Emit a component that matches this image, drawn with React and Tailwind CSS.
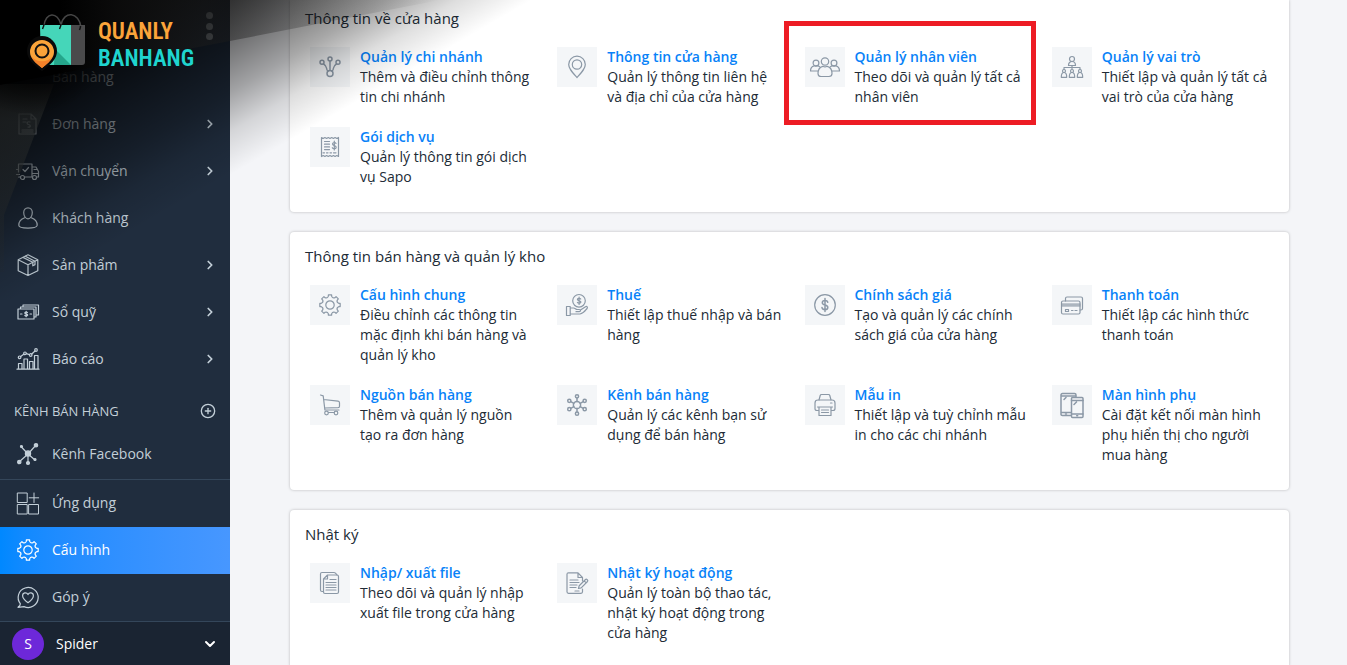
import { ChevronDown, ChevronRight, CirclePlus } from "lucide-react";

// Outline of an eight-tooth gear centred in a 22x22 box
const gearPath = (() => {
  const at = (deg, r) => {
    const a = (deg * Math.PI) / 180;
    return `${(11 + r * Math.cos(a)).toFixed(2)} ${(11 + r * Math.sin(a)).toFixed(2)}`;
  };
  let d = "";
  for (let i = 0; i < 8; i++) {
    const c = i * 45 - 90;
    d += `${i === 0 ? "M" : "L"}${at(c - 9, 10.3)}`;
    d += `L${at(c + 9, 10.3)}L${at(c + 11, 8.8)}Q${at(c + 22.5, 6.9)} ${at(c + 34, 8.8)}`;
  }
  return d + "Z";
})();

const Svg = ({ children }) => (
  <svg
    width="22"
    height="22"
    viewBox="0 0 22 22"
    fill="none"
    stroke="currentColor"
    strokeWidth="1.2"
    strokeLinecap="round"
    strokeLinejoin="round"
    aria-hidden="true"
    className="shrink-0 overflow-visible"
  >
    {children}
  </svg>
);

const icons = {
  order: (
    <>
      <path d="M2 1h12l5 5v15H2zM14 1v5h5M5 17h11M5 19h11" />
      <path d="M6 6h4M6 9h3M13 9c-3-1-4 2-1.500 2.500S14 14.500 11 14" />
    </>
  ),
  truck: (
    <>
      <path d="M1.500 12V4H15v13H8M15 7h4l2.500 4.500V17h-1.500M-.5 14.500h3M-.5 9.500h2M1.500 17h2M17 9.500h3M15 13.500h6.500" />
      <path d="M6 9.500l2 2 3.500-4" />
      <circle cx="5.500" cy="17.500" r="2" />
      <circle cx="17.500" cy="17.500" r="2" />
    </>
  ),
  user: (
    <>
      <path d="M11 .8c2.600 0 4.300 1.900 4.300 4.800 0 3.400-2 6.200-4.300 6.200S6.700 9 6.700 5.600C6.700 2.700 8.400.8 11 .8z" />
      <path d="M7.700 10.800C4.200 12 1.800 13.600 1.800 18.300c0 1.800 4.600 2.800 9.200 2.800s9.200-1 9.200-2.800c0-4.700-2.400-6.300-5.900-7.500" />
    </>
  ),
  box: (
    <>
      <path d="M11 .8l9.800 5v11L11 21.500 1.200 16.800v-11zM1.200 5.800L11 10.700l9.800-4.900M11 10.700v10.800" />
      <path d="M6 3.400l9.800 4.900v3.500l2.200-1.200V7.200L8.300 2.200" />
    </>
  ),
  cash: (
    <>
      <path d="M1 8h16v10H1zM3.500 7.500V6h15.500v10h-1.500M6 5.500V4h15.500v10H20" />
      <path d="M10.500 11.500c-.6-.8-2.700-.6-2.700.6 0 1.300 2.900.6 2.900 1.900 0 1.200-2.300 1.300-2.900.4M9.200 10.300v5.400M3.500 13h1.500M13 13h1.500" />
    </>
  ),
  chart: (
    <>
      <path d="M0 21.200h22M1.500 21v-5.500H5V21M7 21V11h3.500v10M12.500 21v-7.500H16V21M17.500 21V7.500H21V21" />
      <path d="M3.700 8.600l3-2.300M9.400 5.600l3 1M14.800 6l3.200-3" />
      <circle cx="2.600" cy="9.300" r="1.300" />
      <circle cx="8" cy="5.300" r="1.300" />
      <circle cx="13.700" cy="7" r="1.300" />
      <circle cx="19" cy="2" r="1.300" />
    </>
  ),
  network: (
    <>
      <path d="M11 11L4 3.500M11 11l8-9M11 11l-9 8M11 11v9M11 11l7 6" />
      <g fill="currentColor">
        <circle cx="11" cy="10.500" r="2.600" />
        <circle cx="4.500" cy="3.500" r="1" />
        <circle cx="19" cy="2.200" r="1.700" />
        <circle cx="2.300" cy="19" r="1.700" />
        <circle cx="11" cy="20" r="1.500" />
        <circle cx="18" cy="16.500" r="1" />
      </g>
    </>
  ),
  apps: <path d="M.7 1h9.500v9.500H.7zM.7 12.500h9.500V22H.7zM12 12.500h9.500V22H12zM17 1v9.500M12.200 5.800h9.500" strokeWidth="1" />,
  gear: (
    <>
      <path d={gearPath} />
      <circle cx="11" cy="11" r="4.200" />
    </>
  ),
  feedback: (
    <>
      <path d="M3.400 17.800A10 10 0 1 1 7 20.600L1 21.300c1.500-1 2.400-2 2.400-3.500z" />
      <path d="M11 16.700C7.300 14 5.600 12 5.600 9.700c0-3.200 4-4 5.400-1.100 1.400-2.900 5.400-2.100 5.400 1.100 0 2.300-1.700 4.300-5.400 7z" />
    </>
  ),
  branch: (
    <g strokeWidth="1.5">
      <circle cx="11" cy="3" r="2" />
      <circle cx="3" cy="6.300" r="2" />
      <circle cx="19" cy="6.300" r="2" />
      <circle cx="11" cy="17.500" r="3" />
      <path d="M11 5v9.500M4.500 7.800c1.500 1 2.700 2.200 3 4.200.2 1.600.6 2.500 1.500 3.300M17.500 7.800c-1.500 1-2.700 2.200-3 4.200-.2 1.600-.6 2.500-1.500 3.300" />
    </g>
  ),
  pin: (
    <>
      <path d="M11 21.500C6 16 2.700 12.600 2.700 8.500a8.300 8.300 0 0 1 16.600 0c0 4.100-3.300 7.500-8.300 13z" />
      <circle cx="11" cy="8.500" r="4.700" />
    </>
  ),
  staff: (
    <>
      <circle cx="11" cy="5.500" r="3.700" />
      <path d="M4 17.500c0-4.500 2-6.500 4.800-7.200 1.500.8 2.900.8 4.400 0 2.800.7 4.800 2.700 4.800 7.200 0 2.500-1.500 3-3 3H7c-1.500 0-3-.5-3-3z" />
      <circle cx="2" cy="7" r="2.900" />
      <circle cx="20" cy="7" r="2.900" />
      <path d="M3.500 15h-7c0-3 1.500-4.700 3.600-5.200 1.300.6 2.400.6 3.700 0 .8.200 1.400.5 1.900 1M18.500 15h7c0-3-1.500-4.700-3.600-5.200-1.300.6-2.400.6-3.700 0-.8.200-1.400.5-1.900 1" />
    </>
  ),
  roles: (
    <>
      <circle cx="11" cy="3" r="2.500" />
      <path d="M7.500 9.500c0-2.500 1.500-4 3.500-4s3.500 1.500 3.500 4zM11 9.500V13M3 13.500v-2h16v2" />
      <circle cx="3" cy="15" r="1.500" />
      <circle cx="11" cy="15" r="1.500" />
      <circle cx="19" cy="15" r="1.500" />
      <path d="M.3 21.300c0-3 .7-4.800 2.700-4.800s2.700 1.800 2.700 4.800zM8.300 21.300c0-3 .7-4.800 2.700-4.800s2.700 1.800 2.700 4.800zM16.300 21.300c0-3 .7-4.800 2.700-4.800s2.700 1.800 2.700 4.800z" />
    </>
  ),
  receipt: (
    <>
      <path d="M2.500 1.500l1.700 1 1.700-1 1.700 1 1.700-1 1.700 1 1.700-1 1.700 1 1.700-1 1.700 1 1.700-1v19l-1.700-1-1.700 1-1.700-1-1.700 1-1.700-1-1.700 1-1.700-1-1.700 1-1.700-1-1.700 1z" />
      <path d="M5.500 5.500h5M5.500 8.200h5M5.500 10.900h5M5.500 13.600h5M4 16.800h1.500M7.500 16.800H9M11 16.800h1.500M14.500 16.800H17" />
      <path d="M17 7.500c-.6-1.500-3.500-1.300-3.500.5 0 2 3.700 1.300 3.700 3.300 0 1.900-3.200 2-3.900.4M15.300 5v9" />
    </>
  ),
  tax: (
    <>
      <circle cx="13" cy="6.800" r="6.300" />
      <path d="M14.700 5c-.6-1-3.300-.9-3.300.5 0 1.600 3.500 1 3.500 2.600 0 1.400-2.800 1.500-3.500.4M13.100 3v7.500" />
      <path d="M.5 12.500h3.700v9H.5zM4.200 14h3.300c1.800 0 2 1.500 3.800 1.500h2c1.600 0 1.600 2.200 0 2.200H10M14.500 16l5-3.300c1.500-.7 2.500.6 1.500 1.800-2 2.500-3.500 5-7 5.500H4.200" />
    </>
  ),
  price: (
    <>
      <circle cx="11" cy="11" r="10.300" />
      <path
        d="M13.800 8.300c-.3-1.200-1.300-1.800-2.800-1.800s-2.700.8-2.700 2.200c0 3.200 5.500 1.500 5.500 4.700 0 1.400-1.200 2.200-2.800 2.200s-2.700-.7-3-2M11 4.500v13"
        strokeWidth="1.5"
      />
    </>
  ),
  card: (
    <>
      <path d="M4.500 7V4.500c0-1 .5-1.500 1.500-1.500h14c1 0 1.500.5 1.500 1.500v10c0 1-.5 1.500-1.500 1.500h-1" />
      <rect x=".5" y="7" width="18.500" height="13" rx="1.500" />
      <path d="M.5 10h18.500M.5 12h18.500M10.500 16.500h1.500M14 16.500h2M4.500 15.500h3v2h-3z" />
      <path d="M1 11h18" strokeWidth="1.5" opacity=".5" />
    </>
  ),
  cart: (
    <>
      <path d="M1.500 1l2.700.8 1.700 14.200H20M4.600 5.500l14.400 1.700c1 .1 1.500.6 1.500 1.500v3.500c0 1-.5 1.400-1.500 1.500L5.600 14" />
      <circle cx="7.500" cy="19" r="1.800" />
      <circle cx="17" cy="19" r="1.800" />
      <path d="M9.500 18.500h5.500" />
    </>
  ),
  channels: (
    <g strokeWidth="1.5">
      <circle cx="11" cy="11" r="3.600" />
      <circle cx="11" cy="2.300" r="1.600" />
      <circle cx="11" cy="19.700" r="1.600" />
      <circle cx="3.300" cy="6.800" r="1.600" />
      <circle cx="18.700" cy="6.800" r="1.600" />
      <circle cx="3.300" cy="15.200" r="1.600" />
      <circle cx="18.700" cy="15.200" r="1.600" />
      <path d="M11 4v3.400M11 14.600V18M4.800 7.600l3 1.700M17.200 7.600l-3 1.700M4.800 14.400l3-1.700M17.200 14.400l-3-1.700" />
    </g>
  ),
  printer: (
    <>
      <path d="M5 6l1.200-4.500c.2-.7.500-1 1.300-1h7c.8 0 1.100.3 1.300 1L17 6" />
      <path d="M4.500 16.500H3c-1.400 0-2-.6-2-2V9c0-2 1-3 3-3h14c2 0 3 1 3 3v5.500c0 1.400-.6 2-2 2h-1.500M16.500 9h1.500" />
      <path d="M3.500 13h15M5 13v8.500h12V13M7.500 16h7M7.500 18.500h7" />
    </>
  ),
  screens: (
    <g strokeWidth="1.5">
      <path d="M9.500 21.500H1.500c-.8 0-1.500-.4-1.500-1V1C0 .3.500-.5 1.500-.5h12c1 0 1.500.5 1.500 1.500v2M0 2h15M0 18.500h9.500M3 5.500l2-2" />
      <rect x="10.500" y="3.500" width="11.500" height="20" rx="1" />
      <path d="M10.500 6.500H22M10.500 20H22M15.700 21.800h1M13 10.500l2.500-2.500M4.500 20h1" />
    </g>
  ),
  files: (
    <>
      <path d="M4.500 19.500H3c-1 0-1.500-.5-1.500-1.500V2C1.500 1 2 .5 3 .5h12c.6 0 1 .2 1.500.6L18 3" />
      <path d="M8.500 3H18c1 0 1.500.5 1.500 1.500v15.500c0 1-.5 1.500-1.500 1.500H6c-1 0-1.500-.5-1.500-1.500V7zM8.500 3v4h-4M7 10.500h10M7 13h10M7 15.500h10M7 18h10M11 7.500h6" />
    </>
  ),
  log: (
    <>
      <path d="M16.500 9V5.500L12 .8H2.500c-1 0-1.500.5-1.500 1.500v17.500c0 1 .5 1.500 1.500 1.500H15c1 0 1.500-.5 1.500-1.500V17M12 .8v4.700h4.500M4 8h8M4 10.500h9M4 13h7M4 15.500h6M9 19h4" />
      <path d="M12.500 16.500l.7-2.800 6.300-6.200c1-1 3 .9 2 2l-6.300 6.300zM18.200 8.800l2 2" />
    </>
  ),
};

const menu = [
  { label: "Bán hàng" },
  { label: "Đơn hàng", icon: "order", more: true },
  { label: "Vận chuyển", icon: "truck", more: true },
  { label: "Khách hàng", icon: "user" },
  { label: "Sản phẩm", icon: "box", more: true },
  { label: "Sổ quỹ", icon: "cash", more: true },
  { label: "Báo cáo", icon: "chart", more: true },
];

const sections = [
  {
    title: "Thông tin về cửa hàng",
    items: [
      { icon: "branch", title: "Quản lý chi nhánh", text: "Thêm và điều chỉnh thông tin chi nhánh" },
      { icon: "pin", title: "Thông tin cửa hàng", text: "Quản lý thông tin liên hệ và địa chỉ của cửa hàng" },
      { icon: "staff", title: "Quản lý nhân viên", text: "Theo dõi và quản lý tất cả nhân viên", marked: true },
      { icon: "roles", title: "Quản lý vai trò", text: "Thiết lập và quản lý tất cả vai trò của cửa hàng" },
      { icon: "receipt", title: "Gói dịch vụ", text: "Quản lý thông tin gói dịch vụ Sapo" },
    ],
  },
  {
    title: "Thông tin bán hàng và quản lý kho",
    items: [
      { icon: "gear", title: "Cấu hình chung", text: "Điều chỉnh các thông tin mặc định khi bán hàng và quản lý kho" },
      { icon: "tax", title: "Thuế", text: "Thiết lập thuế nhập và bán hàng" },
      { icon: "price", title: "Chính sách giá", text: "Tạo và quản lý các chính sách giá của cửa hàng" },
      { icon: "card", title: "Thanh toán", text: "Thiết lập các hình thức thanh toán" },
      { icon: "cart", title: "Nguồn bán hàng", text: "Thêm và quản lý nguồn tạo ra đơn hàng" },
      { icon: "channels", title: "Kênh bán hàng", text: "Quản lý các kênh bạn sử dụng để bán hàng" },
      { icon: "printer", title: "Mẫu in", text: "Thiết lập và tuỳ chỉnh mẫu in cho các chi nhánh" },
      { icon: "screens", title: "Màn hình phụ", text: "Cài đặt kết nối màn hình phụ hiển thị cho người mua hàng" },
    ],
  },
  {
    title: "Nhật ký",
    items: [
      { icon: "files", title: "Nhập/ xuất file", text: "Theo dõi và quản lý nhập xuất file trong cửa hàng" },
      { icon: "log", title: "Nhật ký hoạt động", text: "Quản lý toàn bộ thao tác, nhật ký hoạt động trong cửa hàng" },
    ],
  },
];

function MenuItem({ label, icon, more, active }) {
  return (
    <a
      href="#"
      className={
        active
          ? "flex h-[47px] items-center gap-[13px] bg-linear-to-r from-[#0088ff] to-[#4797ff] px-[17px] pb-0.5 text-sm text-white"
          : "flex h-[47px] items-center gap-[13px] px-[17px] pb-0.5 text-sm text-[#c3cfd8]"
      }
    >
      {icon ? <Svg>{icons[icon]}</Svg> : <span className="w-[22px]" />}
      <span className="grow">{label}</span>
      {more && <ChevronRight size={14} strokeWidth={3} className="-mr-1" />}
    </a>
  );
}

function Sidebar() {
  return (
    <aside className="flex w-[230px] shrink-0 flex-col bg-[#202d3e]">
      <div className="flex h-[54px] shrink-0 justify-end px-[17px] pt-3">
        <button type="button" aria-label="Menu" className="flex h-7 w-2 flex-col items-center justify-between text-[#c3cfd8]">
          <span className="size-[7px] rounded-full bg-current" />
          <span className="size-[7px] rounded-full bg-current" />
          <span className="size-[7px] rounded-full bg-current" />
        </button>
      </div>
      <nav className="flex grow flex-col">
        {menu.map((item) => (
          <MenuItem key={item.label} {...item} />
        ))}
        <div className="flex h-12 items-end justify-between px-[14px] pb-2 text-[13px] text-[#c3cfd8]">
          <span className="leading-6">KÊNH BÁN HÀNG</span>
          <button type="button" aria-label="Thêm kênh" className="flex h-6 items-center">
            <CirclePlus size={16} />
          </button>
        </div>
        <MenuItem label="Kênh Facebook" icon="network" />
        <div className="mt-px border-t border-[#34465a]">
          <MenuItem label="Ứng dụng" icon="apps" />
          <MenuItem label="Cấu hình" icon="gear" active />
          <MenuItem label="Góp ý" icon="feedback" />
        </div>
      </nav>
      <button
        type="button"
        className="flex h-[45px] shrink-0 items-center gap-3 border-t border-[#34465a] bg-[#1a2432] px-3 text-left text-sm text-white"
      >
        <span className="flex size-8 items-center justify-center rounded-full bg-[#6d28d9]">S</span>
        <span className="grow">Spider</span>
        <ChevronDown size={16} strokeWidth={3} />
      </button>
    </aside>
  );
}

function SettingItem({ icon, title, text, marked }) {
  return (
    <div className="relative flex items-start gap-[10px] pr-[22px]">
      <span className="flex size-10 shrink-0 items-center justify-center bg-[#f4f6f8] text-[#8b98a6]">
        <Svg>{icons[icon]}</Svg>
      </span>
      <div className="text-sm leading-5">
        <a href="#" className="block font-semibold text-[#0882f8]">
          {title}
        </a>
        <p>{text}</p>
      </div>
      {marked && (
        <div className="pointer-events-none absolute -left-[21px] -top-[26px] h-[104px] w-[252px] border-[5px] border-[#ed1c24]" />
      )}
    </div>
  );
}

// Dark translucent shards with the brand mark in the top left corner
function Watermark() {
  return (
    <div className="pointer-events-none absolute left-0 top-0">
      <svg width="560" height="300" viewBox="0 0 560 300" aria-hidden="true">
        <defs>
          <linearGradient id="fade" gradientUnits="userSpaceOnUse" x1="0" y1="0" x2="134" y2="231">
            <stop offset="0" stopOpacity="1" />
            <stop offset=".3" stopOpacity=".9" />
            <stop offset=".44" stopOpacity=".72" />
            <stop offset=".56" stopOpacity=".56" />
            <stop offset=".73" stopOpacity=".34" />
            <stop offset=".86" stopOpacity=".13" />
            <stop offset="1" stopOpacity="0" />
          </linearGradient>
          <linearGradient id="band" gradientUnits="userSpaceOnUse" x1="60" y1="0" x2="440" y2="0">
            <stop offset="0" stopColor="#000" stopOpacity="1" />
            <stop offset=".15" stopColor="#0c0c0c" stopOpacity=".85" />
            <stop offset=".38" stopColor="#1c1c1c" stopOpacity=".5" />
            <stop offset=".6" stopColor="#1c1c1c" stopOpacity=".28" />
            <stop offset="1" stopColor="#1c1c1c" stopOpacity="0" />
          </linearGradient>
          <linearGradient id="wedge" gradientUnits="userSpaceOnUse" x1="0" y1="84" x2="0" y2="275">
            <stop offset="0" stopColor="#0e0f0f" stopOpacity=".9" />
            <stop offset=".2" stopColor="#262929" stopOpacity=".6" />
            <stop offset=".6" stopColor="#262929" stopOpacity=".45" />
            <stop offset="1" stopColor="#262929" stopOpacity=".1" />
          </linearGradient>
          <radialGradient id="core" gradientUnits="userSpaceOnUse" cx="30" cy="30" r="85">
            <stop offset="0" stopOpacity="1" />
            <stop offset=".4" stopOpacity=".9" />
            <stop offset="1" stopOpacity="0" />
          </radialGradient>
        </defs>
        <rect width="560" height="300" fill="url(#fade)" />
        <path d="M0 84h54L4 215v57H0z" fill="url(#wedge)" />
        <circle cx="30" cy="30" r="85" fill="url(#core)" />
        <path d="M0 85L230 41 440 0H0z" fill="url(#band)" />

        <path d="M44 26c1-14 14-15 17-1M61 25c3-15 18-13 20 2" fill="none" stroke="#454545" strokeWidth="1.5" />
        <path d="M71 25h14v37c0 2-1 3-3 3H71z" fill="#4a4a4b" />
        <path d="M40 25h31v40H41z" fill="#45d6b9" />
        <path d="M55 49l16 16H54z" fill="#25a68b" />
        <path d="M42.500 29c.5-1 1.500-3 1.500-5M59.500 29c.5-1 1.500-3 1.500-5M79.500 30c.5-1 1-3 1-4" fill="none" stroke="#111" strokeWidth="1.5" />
        <path d="M42 71C33 64 27 59 27 51a15 15 0 0 1 30 0c0 8-6 13-15 20z" fill="#0a0a0a" />
        <path d="M42 68C35 62 30 58 30 52a12 12 0 0 1 24 0c0 6-5 10-12 16z" fill="#fba43a" />
        <path d="M31 56c2 5 6 8 11 12 5-4 9-7 11-12-5 7-17 7-22 0z" fill="#f5822a" />
        <circle cx="42" cy="51" r="6.500" fill="#fba43a" stroke="#111" strokeWidth="2" />
        <g fontFamily="'Roboto Condensed','Liberation Sans Narrow','DejaVu Sans Condensed',sans-serif" fontWeight="600" fontSize="23">
          <text x="98" y="39" fill="#fba43a">QUANLY</text>
          <text x="98" y="66" fill="#1fd5cf">BANHANG</text>
        </g>
      </svg>
    </div>
  );
}

export default function App() {
  return (
    <div className="relative flex h-screen overflow-hidden bg-[#f4f5f8] font-['Open_Sans','Noto_Sans',sans-serif] text-[#212b36]">
      <Sidebar />
      <main className="flex min-w-0 grow flex-col gap-5 pl-[60px] pr-[58px]">
        {sections.map((section, i) => (
          <section
            key={section.title}
            className={
              i === 0
                ? "shrink-0 rounded-b-sm bg-white pb-[25px] pl-[15px] pt-2 shadow-[0_0_3px_rgba(0,0,0,0.25)]"
                : "shrink-0 rounded-sm bg-white pb-[25px] pl-[15px] pt-[14px] shadow-[0_0_3px_rgba(0,0,0,0.25)]"
            }
          >
            <h2 className="mb-[19px] text-[15px] leading-5">{section.title}</h2>
            <div className="-mr-[10px] grid grid-cols-4 gap-y-5 pl-[5px]">
              {section.items.map((item) => (
                <SettingItem key={item.title} {...item} />
              ))}
            </div>
          </section>
        ))}
      </main>
      <Watermark />
    </div>
  );
}
